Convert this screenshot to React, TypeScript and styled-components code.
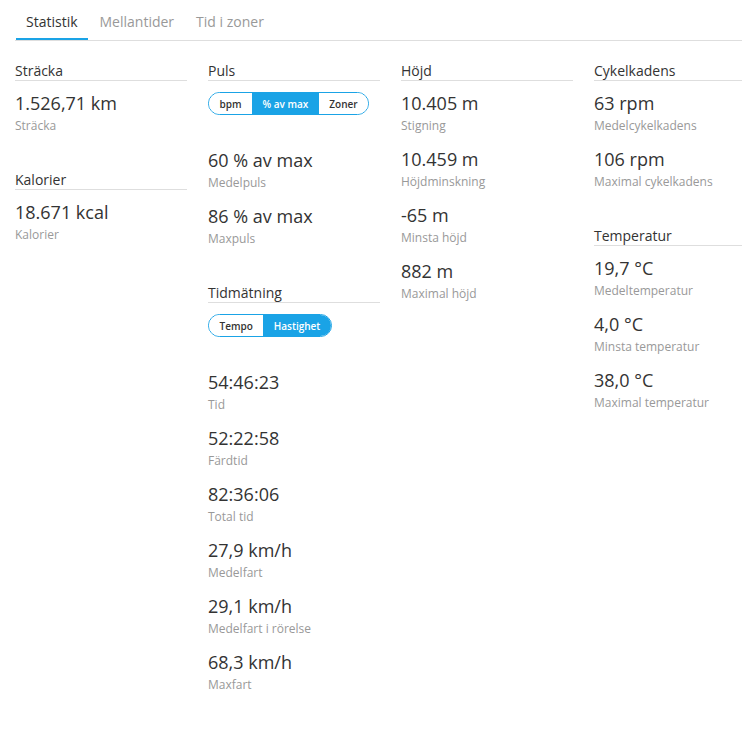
import React from "react";
import styled, { createGlobalStyle } from "styled-components";

const GlobalStyle = createGlobalStyle`
  html, body {
    margin: 0;
    padding: 0;
    background: #fff;
    overflow: hidden;
  }
  body {
    font-family: "Open Sans", "Noto Sans", Arial, sans-serif;
    color: #333;
  }
`;

const ACCENT = "#1aa3e6";

const Page = styled.div`
  padding-left: 15px;
  width: 760px;
`;

const TabBar = styled.div`
  display: flex;
  padding-left: 1px;
  border-bottom: 1px solid #dedede;
  height: 40px;
`;

const Tab = styled.div<{ $active?: boolean }>`
  padding: 12px 10px 8px;
  margin-right: 2px;
  font-size: 14px;
  line-height: 19px;
  color: ${(p) => (p.$active ? "#333" : "#999")};
  border-bottom: 2px solid ${(p) => (p.$active ? ACCENT : "transparent")};
  cursor: pointer;
`;

const Grid = styled.div`
  display: grid;
  grid-template-columns: repeat(4, 172px);
  column-gap: 21px;
  padding-top: 20px;
  align-items: start;
`;

const Column = styled.div`
  display: flex;
  flex-direction: column;
  gap: 33px;
`;

const Section = styled.section`
  display: flex;
  flex-direction: column;
`;

const Heading = styled.h3`
  margin: 0;
  font-size: 14px;
  line-height: 19px;
  font-weight: 400;
  color: #333;
  border-bottom: 1px solid #dedede;
`;

const Item = styled.div`
  padding: 10px 0 3px;
`;

const Value = styled.div`
  font-size: 18px;
  line-height: 24px;
  color: #333;
`;

const Label = styled.div`
  margin-top: 3px;
  font-size: 12px;
  line-height: 16px;
  color: #999;
`;

const ToggleRow = styled.div`
  padding: 11px 0 23px;
  display: flex;
`;

const Toggle = styled.div`
  display: inline-flex;
  height: 21px;
  border: 1px solid ${ACCENT};
  border-radius: 12px;
  overflow: hidden;
`;

const Segment = styled.div<{ $active?: boolean }>`
  display: flex;
  align-items: center;
  padding: 0 10.5px;
  font-size: 10px;
  font-weight: 600;
  color: ${(p) => (p.$active ? "#fff" : "#333")};
  background: ${(p) => (p.$active ? ACCENT : "#fff")};
`;

type Stat = { value: string; label: string };

const StatList = ({ stats }: { stats: Stat[] }) => (
  <>
    {stats.map((s) => (
      <Item key={s.label}>
        <Value>{s.value}</Value>
        <Label>{s.label}</Label>
      </Item>
    ))}
  </>
);

const SegmentToggle = ({ options, active }: { options: string[]; active: string }) => (
  <ToggleRow>
    <Toggle>
      {options.map((o) => (
        <Segment key={o} $active={o === active}>
          {o}
        </Segment>
      ))}
    </Toggle>
  </ToggleRow>
);

export default function App() {
  return (
    <Page>
      <GlobalStyle />
      <TabBar>
        <Tab $active>Statistik</Tab>
        <Tab>Mellantider</Tab>
        <Tab>Tid i zoner</Tab>
      </TabBar>
      <Grid>
        <Column>
          <Section>
            <Heading>Sträcka</Heading>
            <StatList stats={[{ value: "1.526,71 km", label: "Sträcka" }]} />
          </Section>
          <Section>
            <Heading>Kalorier</Heading>
            <StatList stats={[{ value: "18.671 kcal", label: "Kalorier" }]} />
          </Section>
        </Column>
        <Column>
          <Section>
            <Heading>Puls</Heading>
            <SegmentToggle options={["bpm", "% av max", "Zoner"]} active="% av max" />
            <StatList
              stats={[
                { value: "60 % av max", label: "Medelpuls" },
                { value: "86 % av max", label: "Maxpuls" },
              ]}
            />
          </Section>
          <Section>
            <Heading>Tidmätning</Heading>
            <SegmentToggle options={["Tempo", "Hastighet"]} active="Hastighet" />
            <StatList
              stats={[
                { value: "54:46:23", label: "Tid" },
                { value: "52:22:58", label: "Färdtid" },
                { value: "82:36:06", label: "Total tid" },
                { value: "27,9 km/h", label: "Medelfart" },
                { value: "29,1 km/h", label: "Medelfart i rörelse" },
                { value: "68,3 km/h", label: "Maxfart" },
              ]}
            />
          </Section>
        </Column>
        <Column>
          <Section>
            <Heading>Höjd</Heading>
            <StatList
              stats={[
                { value: "10.405 m", label: "Stigning" },
                { value: "10.459 m", label: "Höjdminskning" },
                { value: "-65 m", label: "Minsta höjd" },
                { value: "882 m", label: "Maximal höjd" },
              ]}
            />
          </Section>
        </Column>
        <Column>
          <Section>
            <Heading>Cykelkadens</Heading>
            <StatList
              stats={[
                { value: "63 rpm", label: "Medelcykelkadens" },
                { value: "106 rpm", label: "Maximal cykelkadens" },
              ]}
            />
          </Section>
          <Section>
            <Heading>Temperatur</Heading>
            <StatList
              stats={[
                { value: "19,7 °C", label: "Medeltemperatur" },
                { value: "4,0 °C", label: "Minsta temperatur" },
                { value: "38,0 °C", label: "Maximal temperatur" },
              ]}
            />
          </Section>
        </Column>
      </Grid>
    </Page>
  );
}
